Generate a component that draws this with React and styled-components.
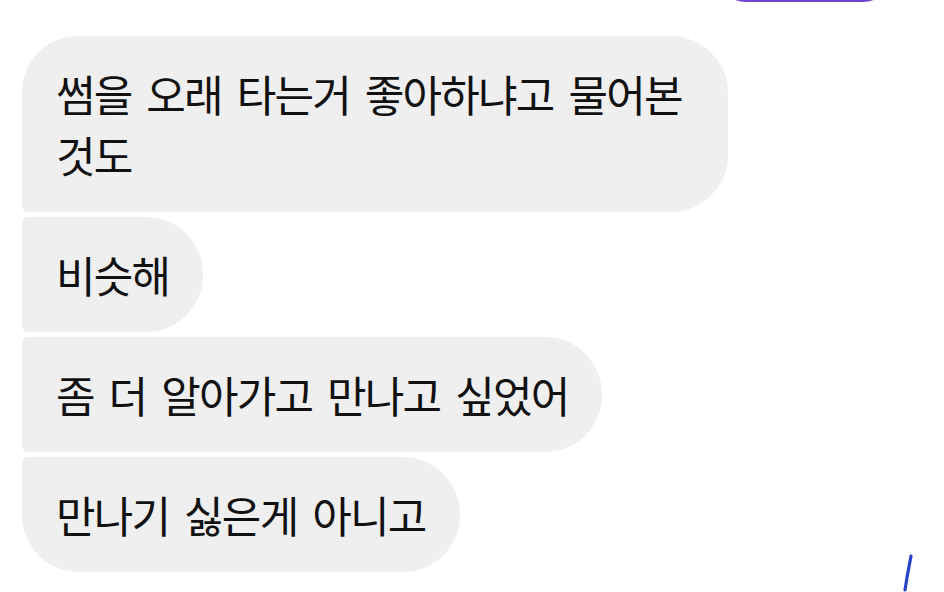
import React from 'react'
import styled, { createGlobalStyle } from 'styled-components'

const Global = createGlobalStyle`
    html, body {
        margin: 0;
        padding: 0;
        background: #fff;
        overflow: hidden;
    }
    body {
        font-family: "Noto Sans CJK KR", "Noto Sans", sans-serif;
    }
`

const Screen = styled.div`
    position: relative;
    width: 944px;
    height: 592px;
    overflow: hidden;
    background: #fff;
`

const Thread = styled.div`
    display: flex;
    flex-direction: column;
    align-items: flex-start;
    gap: 5px;
    padding: 0 22px;
`

const Sent = styled.div`
    align-self: flex-end;
    width: 177px;
    height: 60px;
    margin-top: -58px;
    margin-right: 29px;
    margin-bottom: 29px;
    border-radius: 57px;
    background: linear-gradient(90deg, #7446d6, #6a3fd2);
`

const radius = pos => {
    if (pos === 'first') return '56px 57px 57px 6px'
    if (pos === 'last') return '6px 57px 57px 57px'
    return '6px 57px 57px 6px'
}

const Bubble = styled.div`
    box-sizing: border-box;
    max-width: 706px;
    padding: 27px 34px 27px 34px;
    background: #efefef;
    border-radius: ${p => radius(p.pos)};
    color: #111;
    font-size: 43px;
    letter-spacing: -1.8px;
    word-spacing: 7px;
    line-height: 61px;
    word-break: keep-all;
`

const Pen = styled.svg`
    position: absolute;
    right: 28px;
    bottom: 0;
`

const messages = [
    '썸을 오래 타는거 좋아하냐고 물어본 것도',
    '비슷해',
    '좀 더 알아가고 만나고 싶었어',
    '만나기 싫은게 아니고',
]

const App = () => {
    return (
        <Screen>
            <Global />
            <Thread>
                <Sent />
                {messages.map((m, i) => (
                    <Bubble
                        key={i}
                        pos={i === 0 ? 'first' : i === messages.length - 1 ? 'last' : 'mid'}
                    >
                        {m}
                    </Bubble>
                ))}
            </Thread>
            <Pen width="16" height="40" viewBox="0 0 16 40">
                <path d="M11 4 C10 10 8 18 5 38" stroke="#2a44c8" strokeWidth="3.2" strokeLinecap="round" fill="none" />
            </Pen>
        </Screen>
    )
}

export default App
